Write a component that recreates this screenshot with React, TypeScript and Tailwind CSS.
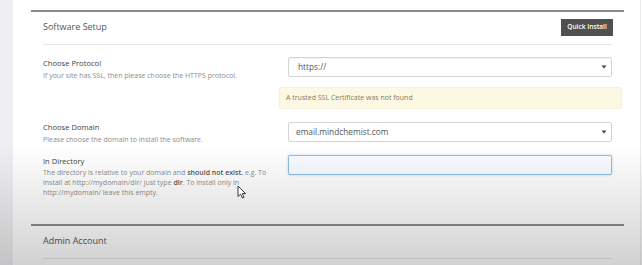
import React from "react";

const font = { fontFamily: '"Open Sans", "Noto Sans", sans-serif' };

function Arrow() {
  return (
    <svg width="6" height="4" viewBox="0 0 6 4" className="shrink-0">
      <path d="M0.5 0.5 L5.5 0.5 L3 3.5 Z" fill="#444" />
    </svg>
  );
}

export default function App() {
  return (
    <div className="relative flex min-h-[265px] overflow-hidden bg-white" style={font}>
      <div className="w-[13px] shrink-0 bg-[#efeff1]" />
      <div className="flex-1 pl-[18px] pt-[10px]">
        <div className="w-[593px] border-t-[2px] border-[#8c8c8c]">
          <div className="mx-[12px] flex h-[33px] items-center justify-between border-b border-[#e6e6e6] pb-[2px]">
            <span className="text-[9px] text-[#555]">Software Setup</span>
            <button className="mr-[-1px] flex h-[17px] w-[52px] items-center justify-center bg-[#505050] text-[6.6px] font-semibold text-white">
              Quick Install
            </button>
          </div>

          <div className="mx-[12px] flex flex-col pt-[12px]">
            {/* Row 1 */}
            <div className="flex items-start">
              <div className="w-[245px] pt-[1px]">
                <div className="text-[7.6px] leading-[10px] text-[#444]">Choose Protocol</div>
                <div className="mt-[3px] text-[7px] leading-[10px] text-[#8d8d8d]">
                  If your site has SSL, then please choose the HTTPS protocol.
                </div>
              </div>
              <div className="flex h-[20px] w-[324px] items-center justify-between rounded-[2px] border border-[#d4d4d4] bg-white pl-[9px] pr-[4px] shadow-[inset_0_1px_1px_rgba(0,0,0,0.04)]">
                <span className="text-[8.3px] text-[#555]">https://</span>
                <Arrow />
              </div>
            </div>

            {/* Alert */}
            <div className="ml-[236px] mt-[6px] flex h-[22px] w-[343px] items-center rounded-[2px] border border-[#f7f0d8] bg-[#fcf8e3] pl-[6px]">
              <span className="text-[7px] text-[#857a62]">A trusted SSL Certificate was not found</span>
            </div>

            {/* Row 2 */}
            <div className="mt-[13px] flex items-start">
              <div className="w-[245px]">
                <div className="text-[7.6px] leading-[10px] text-[#444]">Choose Domain</div>
                <div className="mt-[3px] text-[7px] leading-[10px] text-[#8d8d8d]">
                  Please choose the domain to install the software.
                </div>
              </div>
              <div className="flex h-[20px] w-[324px] items-center justify-between rounded-[2px] border border-[#d4d4d4] bg-white pl-[7px] pr-[4px]">
                <span className="text-[8.3px] text-[#555]">email.mindchemist.com</span>
                <Arrow />
              </div>
            </div>

            {/* Row 3 */}
            <div className="mt-[10px] flex items-start">
              <div className="w-[245px] pt-[1px]">
                <div className="text-[7.6px] leading-[10px] text-[#444]">In Directory</div>
                <div className="mt-[2px] text-[7px] leading-[10px] text-[#8d8d8d]">
                  The directory is relative to your domain and{" "}
                  <span className="font-semibold text-[#555]">should not exist.</span> e.g. To
                  <br />
                  install at http://mydomain/dir/ just type{" "}
                  <span className="font-semibold text-[#555]">dir</span>. To install only in
                  <br />
                  http://mydomain/ leave this empty.
                </div>
              </div>
              <div className="h-[20px] w-[324px] rounded-[2px] border border-[#8fbfe4] bg-[#f8fbff] shadow-[0_0_3px_rgba(102,175,233,0.45)]" />
            </div>
          </div>
        </div>

        <div className="mt-[26px] w-[593px] border-t-[2px] border-[#8c8c8c]">
          <div className="mx-[12px] flex h-[33px] items-center border-b border-[#e6e6e6] pb-[2px]">
            <span className="text-[9px] text-[#555]">Admin Account</span>
          </div>
        </div>
      </div>

      <div className="absolute right-[1px] top-0 h-full w-px bg-[#ececec]" />

      {/* video vignette */}
      <div className="pointer-events-none absolute inset-0 bg-linear-to-b from-transparent from-55% to-black/18" />

      {/* mouse cursor */}
      <svg className="pointer-events-none absolute left-[237px] top-[185px]" width="10" height="14" viewBox="0 0 10 14">
        <path d="M1 1 L1 11.5 L3.6 9.2 L5.4 13 L7 12.3 L5.3 8.6 L8.7 8.6 Z" fill="#fff" stroke="#222" strokeWidth="0.9" strokeLinejoin="round" />
      </svg>
    </div>
  );
}
